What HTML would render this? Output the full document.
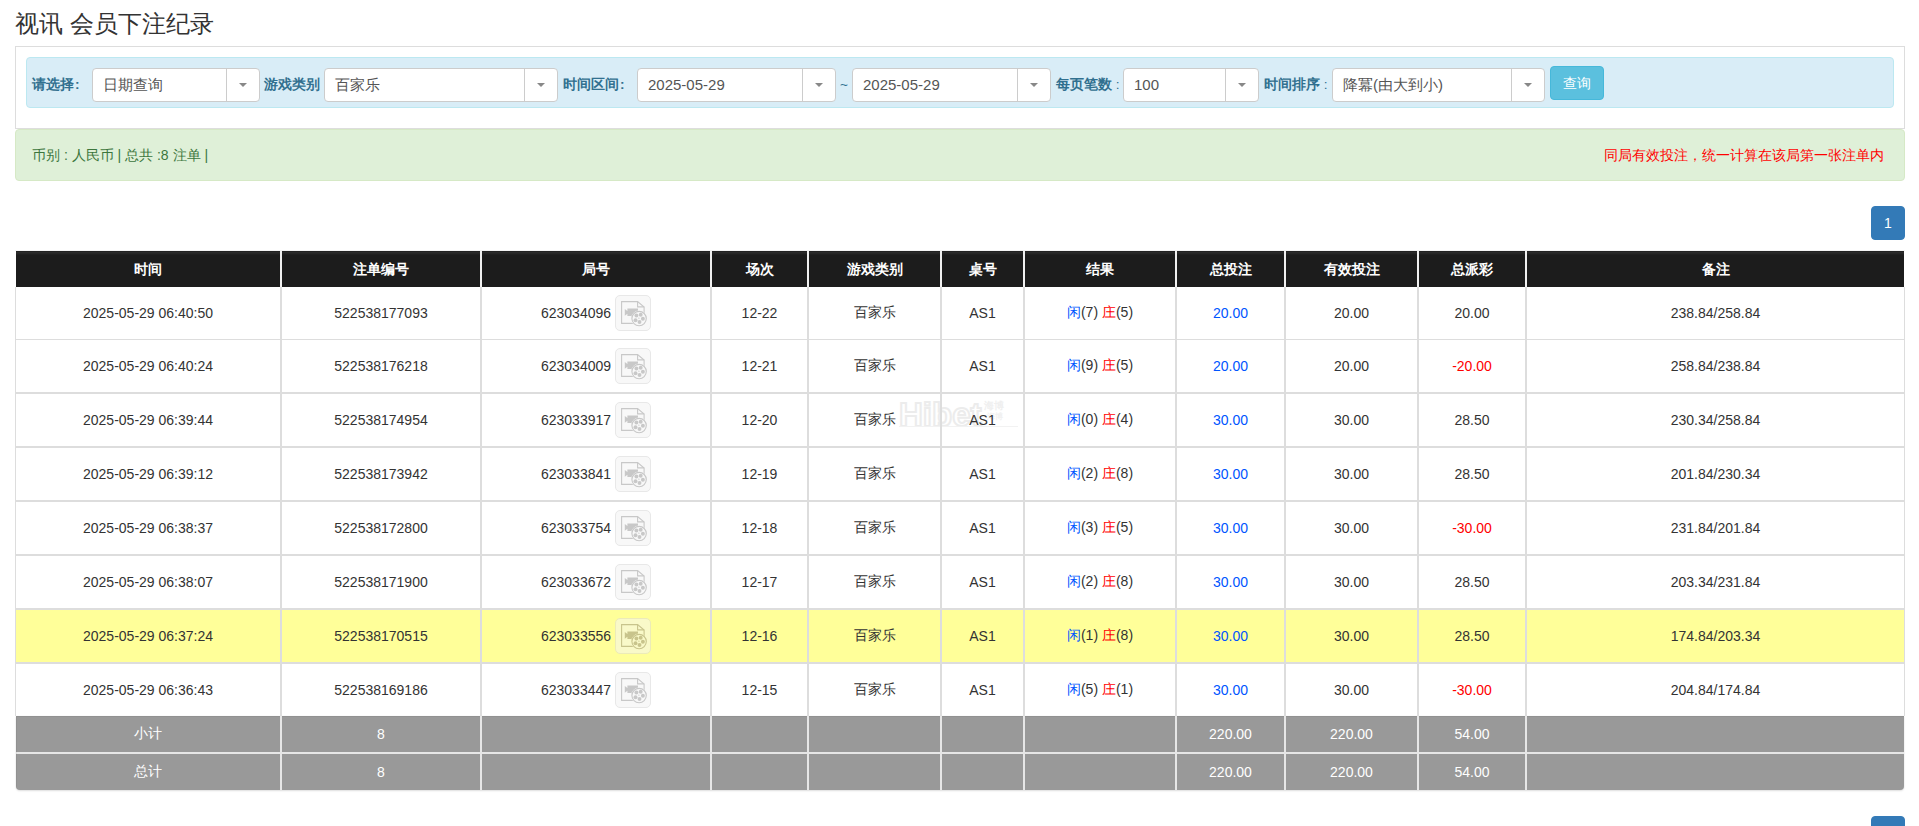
<!DOCTYPE html><html><head><meta charset="utf-8"><title>视讯 会员下注纪录</title><style>
*{box-sizing:border-box}
html,body{margin:0;padding:0;background:#fff}
body{font-family:"Liberation Sans",sans-serif;font-size:14px;color:#333;width:1919px;height:826px;overflow:hidden;position:relative}
.abs{position:absolute}
h3{position:absolute;left:15px;top:7px;margin:0;font-size:24px;font-weight:normal;color:#333;line-height:34px;white-space:nowrap}
.well{position:absolute;left:15px;top:46px;width:1890px;height:83px;border:1px solid #ddd}
.info{position:absolute;left:26px;top:57px;width:1868px;height:51px;background:#d9edf7;border:1px solid #bce8f1;border-radius:4px}
.lbl{position:absolute;top:75px;font-weight:bold;color:#31708f;font-size:13.6px;line-height:20px;white-space:nowrap}
.sel{position:absolute;top:68px;height:34px;background:#fff;border:1px solid #ccc;border-radius:4px}
.sel .st{position:absolute;left:10px;top:0;line-height:32px;font-size:15px;color:#555;white-space:nowrap}
.sel .dv{position:absolute;top:0;width:1px;height:32px;background:#ccc}
.sel .ct{position:absolute;top:14px;width:0;height:0;border-left:4px solid transparent;border-right:4px solid transparent;border-top:4px solid #888}
.btn{position:absolute;left:1550px;top:66px;width:54px;height:34px;background:#5bc0de;border:1px solid #46b8da;border-radius:4px;color:#fff;font-size:14px;line-height:32px;text-align:center;font-weight:500}
.ok{position:absolute;left:15px;top:129px;width:1890px;height:52px;background:#dff0d8;border:1px solid #d6e9c6;border-radius:4px;color:#3c763d}
.ok .l{position:absolute;left:16px;top:15px;line-height:20px;font-size:14px;white-space:nowrap}
.ok .r{position:absolute;right:20px;top:15px;line-height:20px;font-size:14px;color:#f00;white-space:nowrap}
.pg{position:absolute;left:1871px;width:34px;height:34px;background:#337ab7;border:1px solid #337ab7;border-radius:4px;color:#fff;text-align:center;line-height:32px;font-size:14px;font-weight:normal}
.th{position:absolute;top:251px;height:36px;background:#1c1c1c;color:#fff;font-weight:bold;font-size:14px;line-height:36px;text-align:center;white-space:nowrap}
.th:before{content:"";position:absolute;left:0;right:0;top:0;height:4px;background:linear-gradient(#222 0,#222 1px,#2b2b2b 1px,#2b2b2b 2px,#262626 2px,#262626 3px,#202020 3px,#202020 4px)}
.th span{position:relative}
.hsep{position:absolute;top:251px;height:36px;width:2px;background:#f0f0f0}
.td{position:absolute;text-align:center;white-space:nowrap;display:flex;align-items:center;justify-content:center;font-size:14px;color:#333}
.ft{background:#999;color:#fff}
.ftl{border-bottom-left-radius:4px}
.ftr{border-bottom-right-radius:4px}
.vl{position:absolute;background:#ddd}
.hl{position:absolute;background:#ddd}
.ic{display:block;width:36px;height:36px;border:1px solid #e8e8e8;border-radius:5px;background:#f8f8f8;margin-left:4px;position:relative;flex:none}
.fx{display:flex;align-items:center}
.num{display:block}
.ic svg{position:absolute;left:-1px;top:-1px}
.b{color:#0055ff}
.rd{color:#ff0000}
.yl{background:#ffff99}
</style></head><body><h3>视讯 会员下注纪录</h3>
<div class="well"></div>
<div class="info"></div>
<div class="lbl" style="left:32px">请选择<span style="margin-left:1px">:</span></div>
<div class="sel" style="left:92px;width:168px"><span class="st">日期查询</span><i class="dv" style="left:133px"></i><b class="ct" style="left:146px"></b></div>
<div class="lbl" style="left:264px">游戏类别</div>
<div class="sel" style="left:324px;width:234px"><span class="st">百家乐</span><i class="dv" style="left:199px"></i><b class="ct" style="left:212px"></b></div>
<div class="lbl" style="left:563px">时间区间<span style="margin-left:1px">:</span></div>
<div class="sel" style="left:637px;width:199px"><span class="st">2025-05-29</span><i class="dv" style="left:164px"></i><b class="ct" style="left:177px"></b></div>
<div class="lbl" style="left:840px;font-weight:normal">~</div>
<div class="sel" style="left:852px;width:199px"><span class="st">2025-05-29</span><i class="dv" style="left:164px"></i><b class="ct" style="left:177px"></b></div>
<div class="lbl" style="left:1056px">每页笔数<span style="font-weight:normal"> :</span></div>
<div class="sel" style="left:1123px;width:136px"><span class="st">100</span><i class="dv" style="left:101px"></i><b class="ct" style="left:114px"></b></div>
<div class="lbl" style="left:1264px">时间排序<span style="font-weight:normal"> :</span></div>
<div class="sel" style="left:1332px;width:213px"><span class="st">降冪(由大到小)</span><i class="dv" style="left:178px"></i><b class="ct" style="left:191px"></b></div>
<div class="btn">查询</div>
<div class="ok"><span class="l">币别 : 人民币 | 总共 :8 注单 |</span><span class="r">同局有效投注，统一计算在该局第一张注单内</span></div>
<div class="pg" style="top:206px">1</div>
<div class="pg" style="top:816px">1</div>
<div class="hl" style="left:15px;width:1890px;top:250px;height:1px;background:#f4f4f4"></div>
<div class="th" style="left:16px;width:264px"><span>时间</span></div>
<div class="th" style="left:282px;width:198px"><span>注单编号</span></div>
<div class="th" style="left:482px;width:228px"><span>局号</span></div>
<div class="th" style="left:712px;width:95px"><span>场次</span></div>
<div class="th" style="left:809px;width:131px"><span>游戏类别</span></div>
<div class="th" style="left:942px;width:81px"><span>桌号</span></div>
<div class="th" style="left:1025px;width:150px"><span>结果</span></div>
<div class="th" style="left:1177px;width:107px"><span>总投注</span></div>
<div class="th" style="left:1286px;width:131px"><span>有效投注</span></div>
<div class="th" style="left:1419px;width:106px"><span>总派彩</span></div>
<div class="th" style="left:1527px;width:377px"><span>备注</span></div>
<div class="hsep" style="left:280px"></div>
<div class="hsep" style="left:480px"></div>
<div class="hsep" style="left:710px"></div>
<div class="hsep" style="left:807px"></div>
<div class="hsep" style="left:940px"></div>
<div class="hsep" style="left:1023px"></div>
<div class="hsep" style="left:1175px"></div>
<div class="hsep" style="left:1284px"></div>
<div class="hsep" style="left:1417px"></div>
<div class="hsep" style="left:1525px"></div>
<svg style="position:absolute;left:895px;top:396px" width="130" height="36" viewBox="0 0 130 36"><text x="4" y="30" font-family="Liberation Sans" font-weight="bold" font-size="33" fill="none" stroke="#ececec" stroke-width="2" letter-spacing="0">Hibet</text><text x="89" y="13" font-size="10" fill="#efefef" font-weight="bold">海博</text><text x="92" y="23" font-size="8" fill="#f1f1f1" font-weight="bold">海博</text><line x1="4" y1="30.5" x2="123" y2="30.5" stroke="#f2f2f2" stroke-width="1"/></svg>
<div class="td" style="left:16px;width:264px;top:287px;height:52px"><span>2025-05-29 06:40:50</span></div>
<div class="td" style="left:282px;width:198px;top:287px;height:52px"><span>522538177093</span></div>
<div class="td" style="left:482px;width:228px;top:287px;height:52px"><span><span class="fx"><span class="num">623034096</span><span class="ic" style="background:#f8f8f8;border-color:#e8e8e8"><svg width="36" height="36" viewBox="0 0 36 36"><path d="M6.6 6.6H22.6L29.1 12.1V28.4H6.6Z" fill="none" stroke="#c8c8c8" stroke-width="1.1"/><path d="M22.6 6.6V11.9H29.1" fill="none" stroke="#c8c8c8" stroke-width="1.1"/><path d="M9.8 13.9L12.4 16V13.6H23V21H12.4V18.7L9.8 20.8Z" fill="#c8c8c8"/><circle cx="24.1" cy="23.6" r="8.0" fill="#f8f8f8"/><circle cx="24.1" cy="23.6" r="7.2" fill="none" stroke="#c8c8c8" stroke-width="1.1"/><circle cx="21.4" cy="20.5" r="1.95" fill="#c8c8c8"/><circle cx="25.7" cy="19.8" r="1.95" fill="#c8c8c8"/><circle cx="27.9" cy="23.7" r="1.95" fill="#c8c8c8"/><circle cx="24.5" cy="27" r="1.95" fill="#c8c8c8"/><circle cx="20.5" cy="25.2" r="1.95" fill="#c8c8c8"/><circle cx="23.9" cy="23.2" r="0.6" fill="#c8c8c8"/></svg></span></span></span></div>
<div class="td" style="left:712px;width:95px;top:287px;height:52px"><span>12-22</span></div>
<div class="td" style="left:809px;width:131px;top:287px;height:52px"><span>百家乐</span></div>
<div class="td" style="left:942px;width:81px;top:287px;height:52px"><span>AS1</span></div>
<div class="td" style="left:1025px;width:150px;top:287px;height:52px"><span><span class="b">闲</span>(7) <span class="rd">庄</span>(5)</span></div>
<div class="td" style="left:1177px;width:107px;top:287px;height:52px"><span><span class="b">20.00</span></span></div>
<div class="td" style="left:1286px;width:131px;top:287px;height:52px"><span>20.00</span></div>
<div class="td" style="left:1419px;width:106px;top:287px;height:52px"><span>20.00</span></div>
<div class="td" style="left:1527px;width:377px;top:287px;height:52px"><span>238.84/258.84</span></div>
<div class="td" style="left:16px;width:264px;top:340px;height:52px"><span>2025-05-29 06:40:24</span></div>
<div class="td" style="left:282px;width:198px;top:340px;height:52px"><span>522538176218</span></div>
<div class="td" style="left:482px;width:228px;top:340px;height:52px"><span><span class="fx"><span class="num">623034009</span><span class="ic" style="background:#f8f8f8;border-color:#e8e8e8"><svg width="36" height="36" viewBox="0 0 36 36"><path d="M6.6 6.6H22.6L29.1 12.1V28.4H6.6Z" fill="none" stroke="#c8c8c8" stroke-width="1.1"/><path d="M22.6 6.6V11.9H29.1" fill="none" stroke="#c8c8c8" stroke-width="1.1"/><path d="M9.8 13.9L12.4 16V13.6H23V21H12.4V18.7L9.8 20.8Z" fill="#c8c8c8"/><circle cx="24.1" cy="23.6" r="8.0" fill="#f8f8f8"/><circle cx="24.1" cy="23.6" r="7.2" fill="none" stroke="#c8c8c8" stroke-width="1.1"/><circle cx="21.4" cy="20.5" r="1.95" fill="#c8c8c8"/><circle cx="25.7" cy="19.8" r="1.95" fill="#c8c8c8"/><circle cx="27.9" cy="23.7" r="1.95" fill="#c8c8c8"/><circle cx="24.5" cy="27" r="1.95" fill="#c8c8c8"/><circle cx="20.5" cy="25.2" r="1.95" fill="#c8c8c8"/><circle cx="23.9" cy="23.2" r="0.6" fill="#c8c8c8"/></svg></span></span></span></div>
<div class="td" style="left:712px;width:95px;top:340px;height:52px"><span>12-21</span></div>
<div class="td" style="left:809px;width:131px;top:340px;height:52px"><span>百家乐</span></div>
<div class="td" style="left:942px;width:81px;top:340px;height:52px"><span>AS1</span></div>
<div class="td" style="left:1025px;width:150px;top:340px;height:52px"><span><span class="b">闲</span>(9) <span class="rd">庄</span>(5)</span></div>
<div class="td" style="left:1177px;width:107px;top:340px;height:52px"><span><span class="b">20.00</span></span></div>
<div class="td" style="left:1286px;width:131px;top:340px;height:52px"><span>20.00</span></div>
<div class="td" style="left:1419px;width:106px;top:340px;height:52px"><span><span class="rd">-20.00</span></span></div>
<div class="td" style="left:1527px;width:377px;top:340px;height:52px"><span>258.84/238.84</span></div>
<div class="td" style="left:16px;width:264px;top:394px;height:52px"><span>2025-05-29 06:39:44</span></div>
<div class="td" style="left:282px;width:198px;top:394px;height:52px"><span>522538174954</span></div>
<div class="td" style="left:482px;width:228px;top:394px;height:52px"><span><span class="fx"><span class="num">623033917</span><span class="ic" style="background:#f8f8f8;border-color:#e8e8e8"><svg width="36" height="36" viewBox="0 0 36 36"><path d="M6.6 6.6H22.6L29.1 12.1V28.4H6.6Z" fill="none" stroke="#c8c8c8" stroke-width="1.1"/><path d="M22.6 6.6V11.9H29.1" fill="none" stroke="#c8c8c8" stroke-width="1.1"/><path d="M9.8 13.9L12.4 16V13.6H23V21H12.4V18.7L9.8 20.8Z" fill="#c8c8c8"/><circle cx="24.1" cy="23.6" r="8.0" fill="#f8f8f8"/><circle cx="24.1" cy="23.6" r="7.2" fill="none" stroke="#c8c8c8" stroke-width="1.1"/><circle cx="21.4" cy="20.5" r="1.95" fill="#c8c8c8"/><circle cx="25.7" cy="19.8" r="1.95" fill="#c8c8c8"/><circle cx="27.9" cy="23.7" r="1.95" fill="#c8c8c8"/><circle cx="24.5" cy="27" r="1.95" fill="#c8c8c8"/><circle cx="20.5" cy="25.2" r="1.95" fill="#c8c8c8"/><circle cx="23.9" cy="23.2" r="0.6" fill="#c8c8c8"/></svg></span></span></span></div>
<div class="td" style="left:712px;width:95px;top:394px;height:52px"><span>12-20</span></div>
<div class="td" style="left:809px;width:131px;top:394px;height:52px"><span>百家乐</span></div>
<div class="td" style="left:942px;width:81px;top:394px;height:52px"><span>AS1</span></div>
<div class="td" style="left:1025px;width:150px;top:394px;height:52px"><span><span class="b">闲</span>(0) <span class="rd">庄</span>(4)</span></div>
<div class="td" style="left:1177px;width:107px;top:394px;height:52px"><span><span class="b">30.00</span></span></div>
<div class="td" style="left:1286px;width:131px;top:394px;height:52px"><span>30.00</span></div>
<div class="td" style="left:1419px;width:106px;top:394px;height:52px"><span>28.50</span></div>
<div class="td" style="left:1527px;width:377px;top:394px;height:52px"><span>230.34/258.84</span></div>
<div class="td" style="left:16px;width:264px;top:448px;height:52px"><span>2025-05-29 06:39:12</span></div>
<div class="td" style="left:282px;width:198px;top:448px;height:52px"><span>522538173942</span></div>
<div class="td" style="left:482px;width:228px;top:448px;height:52px"><span><span class="fx"><span class="num">623033841</span><span class="ic" style="background:#f8f8f8;border-color:#e8e8e8"><svg width="36" height="36" viewBox="0 0 36 36"><path d="M6.6 6.6H22.6L29.1 12.1V28.4H6.6Z" fill="none" stroke="#c8c8c8" stroke-width="1.1"/><path d="M22.6 6.6V11.9H29.1" fill="none" stroke="#c8c8c8" stroke-width="1.1"/><path d="M9.8 13.9L12.4 16V13.6H23V21H12.4V18.7L9.8 20.8Z" fill="#c8c8c8"/><circle cx="24.1" cy="23.6" r="8.0" fill="#f8f8f8"/><circle cx="24.1" cy="23.6" r="7.2" fill="none" stroke="#c8c8c8" stroke-width="1.1"/><circle cx="21.4" cy="20.5" r="1.95" fill="#c8c8c8"/><circle cx="25.7" cy="19.8" r="1.95" fill="#c8c8c8"/><circle cx="27.9" cy="23.7" r="1.95" fill="#c8c8c8"/><circle cx="24.5" cy="27" r="1.95" fill="#c8c8c8"/><circle cx="20.5" cy="25.2" r="1.95" fill="#c8c8c8"/><circle cx="23.9" cy="23.2" r="0.6" fill="#c8c8c8"/></svg></span></span></span></div>
<div class="td" style="left:712px;width:95px;top:448px;height:52px"><span>12-19</span></div>
<div class="td" style="left:809px;width:131px;top:448px;height:52px"><span>百家乐</span></div>
<div class="td" style="left:942px;width:81px;top:448px;height:52px"><span>AS1</span></div>
<div class="td" style="left:1025px;width:150px;top:448px;height:52px"><span><span class="b">闲</span>(2) <span class="rd">庄</span>(8)</span></div>
<div class="td" style="left:1177px;width:107px;top:448px;height:52px"><span><span class="b">30.00</span></span></div>
<div class="td" style="left:1286px;width:131px;top:448px;height:52px"><span>30.00</span></div>
<div class="td" style="left:1419px;width:106px;top:448px;height:52px"><span>28.50</span></div>
<div class="td" style="left:1527px;width:377px;top:448px;height:52px"><span>201.84/230.34</span></div>
<div class="td" style="left:16px;width:264px;top:502px;height:52px"><span>2025-05-29 06:38:37</span></div>
<div class="td" style="left:282px;width:198px;top:502px;height:52px"><span>522538172800</span></div>
<div class="td" style="left:482px;width:228px;top:502px;height:52px"><span><span class="fx"><span class="num">623033754</span><span class="ic" style="background:#f8f8f8;border-color:#e8e8e8"><svg width="36" height="36" viewBox="0 0 36 36"><path d="M6.6 6.6H22.6L29.1 12.1V28.4H6.6Z" fill="none" stroke="#c8c8c8" stroke-width="1.1"/><path d="M22.6 6.6V11.9H29.1" fill="none" stroke="#c8c8c8" stroke-width="1.1"/><path d="M9.8 13.9L12.4 16V13.6H23V21H12.4V18.7L9.8 20.8Z" fill="#c8c8c8"/><circle cx="24.1" cy="23.6" r="8.0" fill="#f8f8f8"/><circle cx="24.1" cy="23.6" r="7.2" fill="none" stroke="#c8c8c8" stroke-width="1.1"/><circle cx="21.4" cy="20.5" r="1.95" fill="#c8c8c8"/><circle cx="25.7" cy="19.8" r="1.95" fill="#c8c8c8"/><circle cx="27.9" cy="23.7" r="1.95" fill="#c8c8c8"/><circle cx="24.5" cy="27" r="1.95" fill="#c8c8c8"/><circle cx="20.5" cy="25.2" r="1.95" fill="#c8c8c8"/><circle cx="23.9" cy="23.2" r="0.6" fill="#c8c8c8"/></svg></span></span></span></div>
<div class="td" style="left:712px;width:95px;top:502px;height:52px"><span>12-18</span></div>
<div class="td" style="left:809px;width:131px;top:502px;height:52px"><span>百家乐</span></div>
<div class="td" style="left:942px;width:81px;top:502px;height:52px"><span>AS1</span></div>
<div class="td" style="left:1025px;width:150px;top:502px;height:52px"><span><span class="b">闲</span>(3) <span class="rd">庄</span>(5)</span></div>
<div class="td" style="left:1177px;width:107px;top:502px;height:52px"><span><span class="b">30.00</span></span></div>
<div class="td" style="left:1286px;width:131px;top:502px;height:52px"><span>30.00</span></div>
<div class="td" style="left:1419px;width:106px;top:502px;height:52px"><span><span class="rd">-30.00</span></span></div>
<div class="td" style="left:1527px;width:377px;top:502px;height:52px"><span>231.84/201.84</span></div>
<div class="td" style="left:16px;width:264px;top:556px;height:52px"><span>2025-05-29 06:38:07</span></div>
<div class="td" style="left:282px;width:198px;top:556px;height:52px"><span>522538171900</span></div>
<div class="td" style="left:482px;width:228px;top:556px;height:52px"><span><span class="fx"><span class="num">623033672</span><span class="ic" style="background:#f8f8f8;border-color:#e8e8e8"><svg width="36" height="36" viewBox="0 0 36 36"><path d="M6.6 6.6H22.6L29.1 12.1V28.4H6.6Z" fill="none" stroke="#c8c8c8" stroke-width="1.1"/><path d="M22.6 6.6V11.9H29.1" fill="none" stroke="#c8c8c8" stroke-width="1.1"/><path d="M9.8 13.9L12.4 16V13.6H23V21H12.4V18.7L9.8 20.8Z" fill="#c8c8c8"/><circle cx="24.1" cy="23.6" r="8.0" fill="#f8f8f8"/><circle cx="24.1" cy="23.6" r="7.2" fill="none" stroke="#c8c8c8" stroke-width="1.1"/><circle cx="21.4" cy="20.5" r="1.95" fill="#c8c8c8"/><circle cx="25.7" cy="19.8" r="1.95" fill="#c8c8c8"/><circle cx="27.9" cy="23.7" r="1.95" fill="#c8c8c8"/><circle cx="24.5" cy="27" r="1.95" fill="#c8c8c8"/><circle cx="20.5" cy="25.2" r="1.95" fill="#c8c8c8"/><circle cx="23.9" cy="23.2" r="0.6" fill="#c8c8c8"/></svg></span></span></span></div>
<div class="td" style="left:712px;width:95px;top:556px;height:52px"><span>12-17</span></div>
<div class="td" style="left:809px;width:131px;top:556px;height:52px"><span>百家乐</span></div>
<div class="td" style="left:942px;width:81px;top:556px;height:52px"><span>AS1</span></div>
<div class="td" style="left:1025px;width:150px;top:556px;height:52px"><span><span class="b">闲</span>(2) <span class="rd">庄</span>(8)</span></div>
<div class="td" style="left:1177px;width:107px;top:556px;height:52px"><span><span class="b">30.00</span></span></div>
<div class="td" style="left:1286px;width:131px;top:556px;height:52px"><span>30.00</span></div>
<div class="td" style="left:1419px;width:106px;top:556px;height:52px"><span>28.50</span></div>
<div class="td" style="left:1527px;width:377px;top:556px;height:52px"><span>203.34/231.84</span></div>
<div class="td yl" style="left:16px;width:264px;top:610px;height:52px"><span>2025-05-29 06:37:24</span></div>
<div class="td yl" style="left:282px;width:198px;top:610px;height:52px"><span>522538170515</span></div>
<div class="td yl" style="left:482px;width:228px;top:610px;height:52px"><span><span class="fx"><span class="num">623033556</span><span class="ic" style="background:#f9f9c9;border-color:#ecebb8"><svg width="36" height="36" viewBox="0 0 36 36"><path d="M6.6 6.6H22.6L29.1 12.1V28.4H6.6Z" fill="none" stroke="#c8c48c" stroke-width="1.1"/><path d="M22.6 6.6V11.9H29.1" fill="none" stroke="#c8c48c" stroke-width="1.1"/><path d="M9.8 13.9L12.4 16V13.6H23V21H12.4V18.7L9.8 20.8Z" fill="#c8c48c"/><circle cx="24.1" cy="23.6" r="8.0" fill="#f9f9c9"/><circle cx="24.1" cy="23.6" r="7.2" fill="none" stroke="#c8c48c" stroke-width="1.1"/><circle cx="21.4" cy="20.5" r="1.95" fill="#c8c48c"/><circle cx="25.7" cy="19.8" r="1.95" fill="#c8c48c"/><circle cx="27.9" cy="23.7" r="1.95" fill="#c8c48c"/><circle cx="24.5" cy="27" r="1.95" fill="#c8c48c"/><circle cx="20.5" cy="25.2" r="1.95" fill="#c8c48c"/><circle cx="23.9" cy="23.2" r="0.6" fill="#c8c48c"/></svg></span></span></span></div>
<div class="td yl" style="left:712px;width:95px;top:610px;height:52px"><span>12-16</span></div>
<div class="td yl" style="left:809px;width:131px;top:610px;height:52px"><span>百家乐</span></div>
<div class="td yl" style="left:942px;width:81px;top:610px;height:52px"><span>AS1</span></div>
<div class="td yl" style="left:1025px;width:150px;top:610px;height:52px"><span><span class="b">闲</span>(1) <span class="rd">庄</span>(8)</span></div>
<div class="td yl" style="left:1177px;width:107px;top:610px;height:52px"><span><span class="b">30.00</span></span></div>
<div class="td yl" style="left:1286px;width:131px;top:610px;height:52px"><span>30.00</span></div>
<div class="td yl" style="left:1419px;width:106px;top:610px;height:52px"><span>28.50</span></div>
<div class="td yl" style="left:1527px;width:377px;top:610px;height:52px"><span>174.84/203.34</span></div>
<div class="td" style="left:16px;width:264px;top:664px;height:52px"><span>2025-05-29 06:36:43</span></div>
<div class="td" style="left:282px;width:198px;top:664px;height:52px"><span>522538169186</span></div>
<div class="td" style="left:482px;width:228px;top:664px;height:52px"><span><span class="fx"><span class="num">623033447</span><span class="ic" style="background:#f8f8f8;border-color:#e8e8e8"><svg width="36" height="36" viewBox="0 0 36 36"><path d="M6.6 6.6H22.6L29.1 12.1V28.4H6.6Z" fill="none" stroke="#c8c8c8" stroke-width="1.1"/><path d="M22.6 6.6V11.9H29.1" fill="none" stroke="#c8c8c8" stroke-width="1.1"/><path d="M9.8 13.9L12.4 16V13.6H23V21H12.4V18.7L9.8 20.8Z" fill="#c8c8c8"/><circle cx="24.1" cy="23.6" r="8.0" fill="#f8f8f8"/><circle cx="24.1" cy="23.6" r="7.2" fill="none" stroke="#c8c8c8" stroke-width="1.1"/><circle cx="21.4" cy="20.5" r="1.95" fill="#c8c8c8"/><circle cx="25.7" cy="19.8" r="1.95" fill="#c8c8c8"/><circle cx="27.9" cy="23.7" r="1.95" fill="#c8c8c8"/><circle cx="24.5" cy="27" r="1.95" fill="#c8c8c8"/><circle cx="20.5" cy="25.2" r="1.95" fill="#c8c8c8"/><circle cx="23.9" cy="23.2" r="0.6" fill="#c8c8c8"/></svg></span></span></span></div>
<div class="td" style="left:712px;width:95px;top:664px;height:52px"><span>12-15</span></div>
<div class="td" style="left:809px;width:131px;top:664px;height:52px"><span>百家乐</span></div>
<div class="td" style="left:942px;width:81px;top:664px;height:52px"><span>AS1</span></div>
<div class="td" style="left:1025px;width:150px;top:664px;height:52px"><span><span class="b">闲</span>(5) <span class="rd">庄</span>(1)</span></div>
<div class="td" style="left:1177px;width:107px;top:664px;height:52px"><span><span class="b">30.00</span></span></div>
<div class="td" style="left:1286px;width:131px;top:664px;height:52px"><span>30.00</span></div>
<div class="td" style="left:1419px;width:106px;top:664px;height:52px"><span><span class="rd">-30.00</span></span></div>
<div class="td" style="left:1527px;width:377px;top:664px;height:52px"><span>204.84/174.84</span></div>
<div class="hl" style="left:15px;width:1890px;top:339px;height:1px"></div>
<div class="hl" style="left:15px;width:1890px;top:392px;height:2px"></div>
<div class="hl" style="left:15px;width:1890px;top:446px;height:2px"></div>
<div class="hl" style="left:15px;width:1890px;top:500px;height:2px"></div>
<div class="hl" style="left:15px;width:1890px;top:554px;height:2px"></div>
<div class="hl" style="left:15px;width:1890px;top:608px;height:2px"></div>
<div class="hl" style="left:15px;width:1890px;top:662px;height:2px"></div>
<div class="td ft" style="left:16px;width:264px;top:716px;height:36px"><span>小计</span></div>
<div class="td ft" style="left:282px;width:198px;top:716px;height:36px"><span>8</span></div>
<div class="td ft" style="left:482px;width:228px;top:716px;height:36px"><span></span></div>
<div class="td ft" style="left:712px;width:95px;top:716px;height:36px"><span></span></div>
<div class="td ft" style="left:809px;width:131px;top:716px;height:36px"><span></span></div>
<div class="td ft" style="left:942px;width:81px;top:716px;height:36px"><span></span></div>
<div class="td ft" style="left:1025px;width:150px;top:716px;height:36px"><span></span></div>
<div class="td ft" style="left:1177px;width:107px;top:716px;height:36px"><span>220.00</span></div>
<div class="td ft" style="left:1286px;width:131px;top:716px;height:36px"><span>220.00</span></div>
<div class="td ft" style="left:1419px;width:106px;top:716px;height:36px"><span>54.00</span></div>
<div class="td ft" style="left:1527px;width:377px;top:716px;height:36px"><span></span></div>
<div class="td ft ftl" style="left:16px;width:264px;top:754px;height:36px"><span>总计</span></div>
<div class="td ft" style="left:282px;width:198px;top:754px;height:36px"><span>8</span></div>
<div class="td ft" style="left:482px;width:228px;top:754px;height:36px"><span></span></div>
<div class="td ft" style="left:712px;width:95px;top:754px;height:36px"><span></span></div>
<div class="td ft" style="left:809px;width:131px;top:754px;height:36px"><span></span></div>
<div class="td ft" style="left:942px;width:81px;top:754px;height:36px"><span></span></div>
<div class="td ft" style="left:1025px;width:150px;top:754px;height:36px"><span></span></div>
<div class="td ft" style="left:1177px;width:107px;top:754px;height:36px"><span>220.00</span></div>
<div class="td ft" style="left:1286px;width:131px;top:754px;height:36px"><span>220.00</span></div>
<div class="td ft" style="left:1419px;width:106px;top:754px;height:36px"><span>54.00</span></div>
<div class="td ft ftr" style="left:1527px;width:377px;top:754px;height:36px"><span></span></div>
<div class="hl" style="left:16px;width:1888px;top:752px;height:2px;background:#e6e6e6"></div>
<div style="position:absolute;left:16px;top:716px;width:1888px;height:74px;border-radius:0 0 4px 4px;box-shadow:0 0 1px rgba(0,0,0,.12),0 1px 2px rgba(0,0,0,.12),inset 1px 1px 0 rgba(0,0,0,.05);background:transparent"></div>
<div class="vl" style="left:15px;top:287px;width:1px;height:429px"></div>
<div class="vl" style="left:1904px;top:287px;width:1px;height:429px"></div>
<div class="vl" style="left:280px;top:287px;width:2px;height:429px"></div>
<div class="vl" style="left:280px;top:716px;width:2px;height:74px;background:#e6e6e6"></div>
<div class="vl" style="left:480px;top:287px;width:2px;height:429px"></div>
<div class="vl" style="left:480px;top:716px;width:2px;height:74px;background:#e6e6e6"></div>
<div class="vl" style="left:710px;top:287px;width:2px;height:429px"></div>
<div class="vl" style="left:710px;top:716px;width:2px;height:74px;background:#e6e6e6"></div>
<div class="vl" style="left:807px;top:287px;width:2px;height:429px"></div>
<div class="vl" style="left:807px;top:716px;width:2px;height:74px;background:#e6e6e6"></div>
<div class="vl" style="left:940px;top:287px;width:2px;height:429px"></div>
<div class="vl" style="left:940px;top:716px;width:2px;height:74px;background:#e6e6e6"></div>
<div class="vl" style="left:1023px;top:287px;width:2px;height:429px"></div>
<div class="vl" style="left:1023px;top:716px;width:2px;height:74px;background:#e6e6e6"></div>
<div class="vl" style="left:1175px;top:287px;width:2px;height:429px"></div>
<div class="vl" style="left:1175px;top:716px;width:2px;height:74px;background:#e6e6e6"></div>
<div class="vl" style="left:1284px;top:287px;width:2px;height:429px"></div>
<div class="vl" style="left:1284px;top:716px;width:2px;height:74px;background:#e6e6e6"></div>
<div class="vl" style="left:1417px;top:287px;width:2px;height:429px"></div>
<div class="vl" style="left:1417px;top:716px;width:2px;height:74px;background:#e6e6e6"></div>
<div class="vl" style="left:1525px;top:287px;width:2px;height:429px"></div>
<div class="vl" style="left:1525px;top:716px;width:2px;height:74px;background:#e6e6e6"></div></body></html>
